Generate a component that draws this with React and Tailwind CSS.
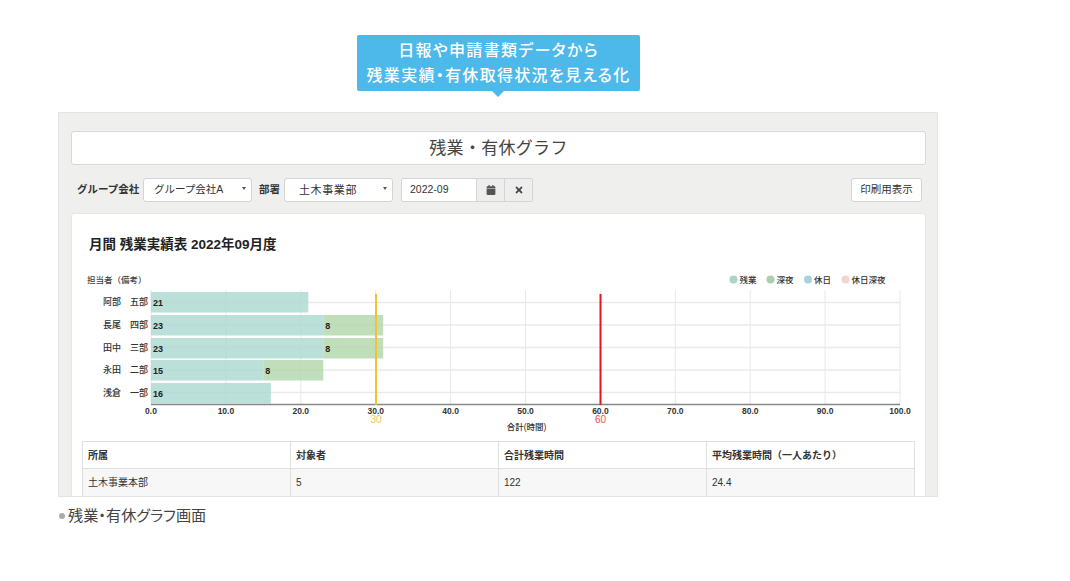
import { FaCalendar, FaTimes } from "react-icons/fa"

const FONT = "'Liberation Sans','Noto Sans CJK JP',sans-serif"

const rows = [
  { name: "阿部　五部", y: 292, a: 21, b: 0 },
  { name: "長尾　四部", y: 315, a: 23, b: 8 },
  { name: "田中　三部", y: 338, a: 23, b: 8 },
  { name: "永田　二部", y: 360, a: 15, b: 8 },
  { name: "浅倉　一部", y: 383, a: 16, b: 0 },
]

const legend = [
  { label: "残業", x: 733.5, color: "#a6d5ca" },
  { label: "深夜", x: 770.5, color: "#a9d0ae" },
  { label: "休日", x: 808, color: "#a8d2d8" },
  { label: "休日深夜", x: 845.5, color: "#f3d5cb" },
]

const x0 = 151
const unit = 7.49
const ticks = [0, 10, 20, 30, 40, 50, 60, 70, 80, 90, 100]
const gridY = [302.5, 325, 347.5, 370, 392.5]

const Chart = () => (
  <svg viewBox="82 265 833 172" className="block w-[833px] h-[172px] mt-[12px]" style={{ fontFamily: FONT }}>
    <text x="87" y="283" fontSize="8.5" fontWeight="500" fill="#444">担当者（備考）</text>

    {legend.map((l) => (
      <g key={l.label}>
        <circle cx={l.x} cy="279.5" r="4" fill={l.color} />
        <text x={l.x + 6} y="283" fontSize="8.5" fontWeight="500" fill="#333">{l.label}</text>
      </g>
    ))}

    {gridY.map((y) => (
      <line key={y} x1={x0} x2="900" y1={y} y2={y} stroke="#eaeaea" strokeWidth="1.5" />
    ))}
    {ticks.map((t) => (
      <line key={t} x1={x0 + t * unit} x2={x0 + t * unit} y1="290" y2="404" stroke="#e8e8e8" />
    ))}

    {rows.map((r) => (
      <g key={r.name}>
        <text x="148" y={r.y + 13} fontSize="9" fontWeight="500" textAnchor="end" fill="#333">{r.name}</text>
        <rect x={x0} y={r.y} width={r.a * unit} height="20.5" fill="#a9d8cf" fillOpacity="0.8" />
        {r.b > 0 && (
          <rect x={x0 + r.a * unit} y={r.y} width={r.b * unit} height="20.5" fill="#b2d6aa" fillOpacity="0.8" />
        )}
        <text x={x0 + 2} y={r.y + 13.5} fontSize="9" fontWeight="700" fill="#222">{r.a}</text>
        {r.b > 0 && (
          <text x={x0 + r.a * unit + 2} y={r.y + 13.5} fontSize="9" fontWeight="700" fill="#222">{r.b}</text>
        )}
      </g>
    ))}

    <line x1={x0} x2="900" y1="404.5" y2="404.5" stroke="#888" strokeWidth="1.5" />
    <line x1="376" x2="376" y1="294" y2="405" stroke="#f3c230" strokeWidth="2" />
    <line x1="600.5" x2="600.5" y1="294" y2="405" stroke="#e8141c" strokeWidth="2" />

    {ticks.map((t) => (
      <text key={t} x={x0 + t * unit} y="414" fontSize="8.5" fontWeight="700" textAnchor="middle" fill="#333">
        {t.toFixed(1)}
      </text>
    ))}
    <text x="376" y="423" fontSize="10" textAnchor="middle" fill="#f3c552">30</text>
    <text x="600.5" y="423" fontSize="10" textAnchor="middle" fill="#f0504f">60</text>
    <text x="526.5" y="430" fontSize="8.5" fontWeight="500" textAnchor="middle" fill="#333">合計(時間)</text>
  </svg>
)

const Arrow = ({ className }) => (
  <span className={"absolute border-x-[2.5px] border-t-[3px] border-x-transparent border-t-[#555] " + className} />
)

export default function App() {
  return (
    <div className="w-[1070px] h-[581px] overflow-hidden bg-white pt-[35px]" style={{ fontFamily: FONT }}>

      {/* CALLOUT */}
      <div className="relative w-[283px] h-[56px] ml-[357px] rounded-[2px] bg-[#4cb9ea] flex flex-col items-center justify-center text-white text-[16px] leading-[25px] font-medium tracking-[1.3px] [font-feature-settings:'palt']">
        <p>日報や申請書類データから</p>
        <p>残業実績・有休取得状況を見える化</p>
        <span className="absolute left-[135px] top-[56px] border-x-[6px] border-t-[6px] border-x-transparent border-t-[#4cb9ea]" />
      </div>

      {/* PANEL */}
      <div className="w-[880px] h-[385px] ml-[58px] mt-[21px] overflow-hidden bg-[#efefee] border border-[#e3e3e3] pl-[12px] pr-[11px] pt-[18px] flex flex-col">

        <div className="h-[34px] shrink-0 bg-white border border-[#d8d8d8] rounded-[3px] flex items-center justify-center pt-[2px] text-[17px] tracking-[0.3px] text-[#444]">
          残業・有休グラフ
        </div>

        {/* TOOLBAR */}
        <div className="h-[24px] shrink-0 mt-[13px] flex items-center text-[#333]">
          <span className="ml-[6px] w-[66px] text-[10.5px] font-bold whitespace-nowrap">グループ会社</span>
          <div className="relative w-[109px] h-[24px] bg-white border border-[#d4d4d4] rounded-[3px] flex items-center pl-[10px] text-[10.5px] whitespace-nowrap">
            グループ会社A
            <Arrow className="right-[5px] top-[8px]" />
          </div>
          <span className="ml-[7px] w-[25px] text-[10.5px] font-bold whitespace-nowrap">部署</span>
          <div className="relative w-[109px] h-[24px] bg-white border border-[#d4d4d4] rounded-[3px] flex items-center pl-[14px] text-[11px] tracking-[0.6px] whitespace-nowrap">
            土木事業部
            <Arrow className="right-[5px] top-[8px]" />
          </div>
          <div className="ml-[8px] flex h-[24px] w-[132px] border border-[#d4d4d4] rounded-[2px] bg-white text-[10.5px]">
            <div className="w-[74px] flex items-center pl-[8px]">2022-09</div>
            <div className="w-[28px] flex items-center justify-center bg-[#eeeeee] border-l border-[#d4d4d4] text-[#555]">
              <FaCalendar size={10} />
            </div>
            <div className="flex-1 flex items-center justify-center bg-[#eeeeee] border-l border-[#d4d4d4] text-[#444]">
              <FaTimes size={10} />
            </div>
          </div>
          <button className="ml-auto mr-[4px] w-[71px] h-[24px] bg-white border border-[#d4d4d4] rounded-[3px] text-[10.5px]">
            印刷用表示
          </button>
        </div>

        {/* CARD */}
        <div className="mt-[11px] flex-1 bg-white border border-[#e6e6e6] rounded-t-[3px] px-[10px]">
          <h2 className="mt-[23px] ml-[7px] text-[13.5px] leading-[16px] font-bold text-[#222]">
            月間 残業実績表 2022年09月度
          </h2>

          <Chart />

          <table className="w-[833px] mt-[4px] table-fixed border-collapse text-[10px] text-[#333]">
            <thead>
              <tr className="h-[27px] text-left font-bold">
                <th className="border border-[#dfdfdf] pl-[5px]">所属</th>
                <th className="border border-[#dfdfdf] pl-[5px]">対象者</th>
                <th className="border border-[#dfdfdf] pl-[5px]">合計残業時間</th>
                <th className="border border-[#dfdfdf] pl-[5px]">平均残業時間（一人あたり）</th>
              </tr>
            </thead>
            <tbody>
              <tr className="h-[27px] bg-[#f7f7f7]">
                <td className="border-x border-[#dfdfdf] pl-[5px]">土木事業本部</td>
                <td className="border-x border-[#dfdfdf] pl-[5px]">5</td>
                <td className="border-x border-[#dfdfdf] pl-[5px]">122</td>
                <td className="border-x border-[#dfdfdf] pl-[5px]">24.4</td>
              </tr>
            </tbody>
          </table>
        </div>
      </div>

      {/* CAPTION */}
      <p className="ml-[59px] mt-[9px] flex items-center text-[15.2px] leading-[20px] text-[#444] [font-feature-settings:'palt']">
        <span className="w-[6px] h-[6px] rounded-full bg-[#aaaaaa] mr-[3px]" />
        残業・有休グラフ画面
      </p>
    </div>
  )
}
